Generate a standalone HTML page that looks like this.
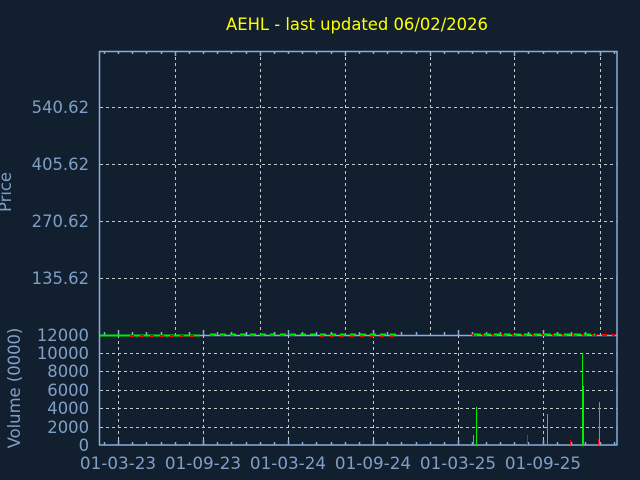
<!DOCTYPE html>
<html><head><meta charset="utf-8"><style>
html,body{margin:0;padding:0;background:#111f2f;}
svg{display:block;}
text{font-family:"DejaVu Sans","Liberation Sans",sans-serif;fill:#7f9fc7;}
</style></head><body>
<svg width="640" height="480" viewBox="0 0 640 480" xmlns="http://www.w3.org/2000/svg">
<rect width="640" height="480" fill="#111f2f"/>
<text x="357" y="30" font-size="16.4" text-anchor="middle" style="fill:#ffff00">AEHL - last updated 06/02/2026</text>
<g stroke="#c8c8c8" stroke-width="1" stroke-dasharray="3,3" fill="none">
<path d="M100 107.5H617M100 164.5H617M100 221.5H617M100 278.5H617"/>
<path d="M175.5 51V335M260.5 51V335M345.5 51V335M430.5 51V335M514.5 51V335M600.5 51V335"/>
<path d="M100 353.5H617M100 371.5H617M100 390.5H617M100 408.5H617M100 427.5H617"/>
<path d="M118.5 335V445M203.5 335V445M288.5 335V445M373.5 335V445M458.5 335V445M543.5 335V445"/>
</g>
<g stroke="#8aaedb" stroke-width="1.5" fill="none">
<rect x="99.5" y="51.5" width="517.5" height="393.5"/>
<path d="M100 335.5H617"/>
<path d="M104.5 51v3M118.5 51v3M132.5 51v3M146.5 51v3M161.5 51v3M175.5 51v5M189.5 51v3M203.5 51v3M217.5 51v3M231.5 51v3M246.5 51v3M260.5 51v5M274.5 51v3M288.5 51v3M302.5 51v3M316.5 51v3M331.5 51v3M345.5 51v5M359.5 51v3M373.5 51v3M387.5 51v3M401.5 51v3M416.5 51v3M430.5 51v5M444.5 51v3M458.5 51v3M472.5 51v3M486.5 51v3M500.5 51v3M514.5 51v5M528.5 51v3M543.5 51v3M557.5 51v3M571.5 51v3M585.5 51v3M600.5 51v5M614.5 51v3"/>
<path d="M104.5 445v-3M118.5 445v-5M132.5 445v-3M146.5 445v-3M161.5 445v-3M175.5 445v-3M189.5 445v-3M203.5 445v-5M217.5 445v-3M231.5 445v-3M246.5 445v-3M260.5 445v-3M274.5 445v-3M288.5 445v-5M302.5 445v-3M316.5 445v-3M331.5 445v-3M345.5 445v-3M359.5 445v-3M373.5 445v-5M387.5 445v-3M401.5 445v-3M416.5 445v-3M430.5 445v-3M444.5 445v-3M458.5 445v-5M472.5 445v-3M486.5 445v-3M500.5 445v-3M514.5 445v-3M528.5 445v-3M543.5 445v-5M557.5 445v-3M571.5 445v-3M585.5 445v-3M600.5 445v-3M614.5 445v-3"/>
<path d="M104.5 335v-3M118.5 335v-5M132.5 335v-3M146.5 335v-3M161.5 335v-3M189.5 335v-3M203.5 335v-5M217.5 335v-3M231.5 335v-3M246.5 335v-3M274.5 335v-3M288.5 335v-5M302.5 335v-3M316.5 335v-3M331.5 335v-3M359.5 335v-3M373.5 335v-5M387.5 335v-3M401.5 335v-3M416.5 335v-3M444.5 335v-3M458.5 335v-5M472.5 335v-3M486.5 335v-3M500.5 335v-3M528.5 335v-3M543.5 335v-5M557.5 335v-3M571.5 335v-3M585.5 335v-3"/>
</g>
<g font-size="16.4" text-anchor="end">
<text x="89" y="113">540.62</text><text x="89" y="170">405.62</text><text x="89" y="227">270.62</text><text x="89" y="284">135.62</text>
<text x="89" y="341">12000</text><text x="89" y="359">10000</text><text x="89" y="377">8000</text><text x="89" y="396">6000</text><text x="89" y="414">4000</text><text x="89" y="433">2000</text><text x="89" y="451">0</text>
</g>
<text transform="translate(11,192) rotate(-90)" font-size="16.4" text-anchor="middle">Price</text>
<text transform="translate(20,388) rotate(-90)" font-size="16.4" text-anchor="middle">Volume (0000)</text>
<g font-size="16.8" text-anchor="middle">
<text x="118" y="469">01-03-23</text><text x="203" y="469">01-09-23</text><text x="288" y="469">01-03-24</text><text x="373" y="469">01-09-24</text><text x="458" y="469">01-03-25</text><text x="543" y="469">01-09-25</text>
</g>
<g stroke-width="2">
<path d="M100 335.5H200" stroke="#00ee00"/>
<path d="M130 336H200M210 335H300M320 336H400" stroke="#ff0000" stroke-dasharray="4,6"/>
<path d="M210 334.5H400" stroke="#00ee00" stroke-dasharray="6,4"/>
<path d="M472 335H615" stroke="#ff0000" stroke-dasharray="5,5"/>
<path d="M474 334.5H595" stroke="#00ee00" stroke-dasharray="7,3"/>
</g>
<g stroke-width="1">
<path d="M476.5 445V407M473.5 445V435" stroke="#00ee00"/>
<path d="M547.5 445V414" stroke="#8090a0"/>
<path d="M582.5 445V353M583.5 445V386" stroke="#00ee00"/>
<path d="M599.5 445V402" stroke="#8090a0"/>
<path d="M527.5 445V435M570.5 445V440M598.5 445V439" stroke="#ff0000"/>
</g>
</svg>
</body></html>
